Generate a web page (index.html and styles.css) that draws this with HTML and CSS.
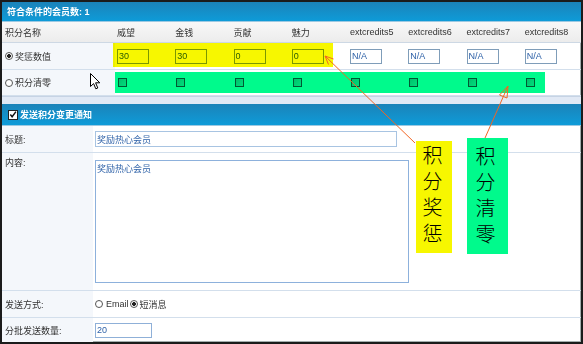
FILE: index.html
```html
<!DOCTYPE html>
<html lang="zh-CN">
<head>
    <meta charset="UTF-8">
    <title>积分奖惩</title>
    <link rel="stylesheet" href="styles.css">
</head>
<body>

    <div class="frame">
        <!-- 积分设置 -->
        <div class="bar">符合条件的会员数: 1</div>

        <div class="cols head">
            <div class="name">积分名称</div>
            <div>威望</div>
            <div>金钱</div>
            <div>贡献</div>
            <div>魅力</div>
            <div>extcredits5</div>
            <div>extcredits6</div>
            <div>extcredits7</div>
            <div>extcredits8</div>
        </div>

        <div class="cols row">
            <div class="name"><label><input type="radio" name="mode" class="radio" checked>奖惩数值</label></div>
            <div><input class="txt" value="30"></div>
            <div><input class="txt" value="30"></div>
            <div><input class="txt" value="0"></div>
            <div><input class="txt" value="0"></div>
            <div><input class="txt" value="N/A"></div>
            <div><input class="txt" value="N/A"></div>
            <div><input class="txt" value="N/A"></div>
            <div><input class="txt" value="N/A"></div>
        </div>

        <div class="cols row row-clear">
            <div class="name"><label><input type="radio" name="mode" class="radio">积分清零</label></div>
            <div><input type="checkbox" class="chk"></div>
            <div><input type="checkbox" class="chk"></div>
            <div><input type="checkbox" class="chk"></div>
            <div><input type="checkbox" class="chk"></div>
            <div><input type="checkbox" class="chk"></div>
            <div><input type="checkbox" class="chk"></div>
            <div><input type="checkbox" class="chk"></div>
            <div><input type="checkbox" class="chk"></div>
        </div>

        <div class="gap"></div>

        <!-- 通知设置 -->
        <div class="bar bar-notice">
            <span class="tick"><svg width="9" height="9" viewBox="0 0 9 9"><path d="M1.5 4.5 L3.5 7 L7.8 1.2" fill="none" stroke="#111" stroke-width="1.6"/></svg></span>
            发送积分变更通知
        </div>

        <div class="form-row">
            <div class="lbl">标题:</div>
            <div class="field"><input class="txt wide" value="奖励热心会员"></div>
        </div>

        <div class="form-row tall">
            <div class="lbl">内容:</div>
            <div class="field"><textarea class="area">奖励热心会员</textarea></div>
        </div>

        <div class="form-row">
            <div class="lbl">发送方式:</div>
            <div class="field">
                <label class="opt"><input type="radio" name="via" class="radio">Email</label>
                <label><input type="radio" name="via" class="radio" checked>短消息</label>
            </div>
        </div>

        <div class="form-row last">
            <div class="lbl">分批发送数量:</div>
            <div class="field"><input class="txt short" value="20"></div>
        </div>

        <!-- 标注 -->
        <div class="hl hl-yellow"></div>
        <div class="hl hl-green"></div>
        <div class="note note-yellow">积分奖惩</div>
        <div class="note note-green">积分清零</div>

        <svg class="arrows" width="579" height="340" viewBox="0 0 579 340">
            <g fill="none" stroke="#f26522" stroke-width="1">
                <line x1="413" y1="141" x2="323" y2="54"/>
                <polyline points="326.5,62.5 323,54 331.5,57"/>
                <line x1="483" y1="136" x2="506" y2="84"/>
                <polygon points="506,84 497.5,93 505,96"/>
            </g>
        </svg>

        <svg class="cursor" width="11" height="17" viewBox="0 0 11 17">
            <path d="M0.5 0.5 L0.5 13.5 L3.6 10.6 L5.8 15.8 L7.8 15 L5.6 9.8 L9.8 9.8 Z" fill="#fff" stroke="#000" stroke-width="1"/>
        </svg>
    </div>

</body>
</html>
```

FILE: styles.css
```css
* {
    box-sizing: border-box;
}

body {
    margin: 0;
    font-family: "Liberation Sans", "Noto Sans CJK SC", sans-serif;
    font-size: 9px;
    color: #333;
    background-color: #fff;
}

.frame {
    position: relative;
    width: 583px;
    height: 344px;
    border: 2px solid #1b1b1b;
    overflow: hidden;
    box-shadow: inset -1px -1px 0 #a3adad;
}

label {
    display: inline-flex;
    align-items: center;
}

/* 蓝色标题栏 */
.bar {
    height: 20px;
    padding-left: 5px;
    display: flex;
    align-items: center;
    background: linear-gradient(#1b83b9, #0e9bd8);
    border-bottom: 1px solid #9cc9e2;
    color: #fff;
    font-weight: bold;
}

.bar-notice {
    height: 22px;
    padding-left: 6px;
    gap: 2px;
}

.tick {
    width: 10px;
    height: 10px;
    display: inline-flex;
    align-items: center;
    justify-content: center;
    background-color: #fff;
    border: 1px solid #222;
}

/* 积分表格 */
.cols {
    display: grid;
    grid-template-columns: 113px repeat(8, 1fr);
}

.cols > div {
    display: flex;
    align-items: center;
    padding-left: 2px;
}

.cols > .name {
    padding-left: 3px;
}

.head {
    height: 21px;
    background: linear-gradient(#f8f8f8, #ececec);
    border-bottom: 1px solid #cdd8e4;
}

.row {
    height: 27px;
    border-bottom: 1px solid #d3dfec;
}

.row-clear {
    height: 26px;
}

.row .name {
    background-color: #f4f7fb;
}

.txt {
    width: 32px;
    height: 15px;
    margin: 0;
    padding: 0 1px;
    border: 1px solid #7f9db9;
    background-color: #fff;
    font: inherit;
    color: #2f62a8;
}

.radio {
    appearance: none;
    width: 8px;
    height: 8px;
    margin: 0 2px 0 0;
    border: 1px solid #555;
    border-radius: 50%;
    background-color: #fff;
}

.radio:checked {
    background: radial-gradient(circle, #222 0 1.6px, #fff 2.2px);
}

.opt .radio {
    margin-right: 3px;
}

.chk {
    appearance: none;
    width: 9px;
    height: 9px;
    margin: 0 0 0 1px;
    border: 1px solid #5a5a5a;
    background: linear-gradient(135deg, #c4c4c4, #e2e2e2);
}

.gap {
    height: 8px;
    background-color: #e1e9f5;
    border-top: 1px solid #c6d3e4;
}

/* 通知表单 */
.form-row {
    display: grid;
    grid-template-columns: 91px 1fr;
    height: 27px;
    border-bottom: 1px solid #d3dfec;
}

.form-row.tall {
    height: 138px;
}

.form-row.last {
    height: 24px;
    border-bottom: none;
}

.lbl {
    display: flex;
    align-items: center;
    padding-left: 3px;
    background-color: #f4f7fb;
}

.tall .lbl {
    align-items: flex-start;
    padding-top: 3px;
}

.field {
    display: flex;
    align-items: center;
    padding-left: 2px;
    gap: 1px;
}

.tall .field {
    align-items: flex-start;
    padding-top: 7px;
}

.txt.wide {
    width: 302px;
    height: 16px;
    border-color: #a8c4e2;
}

.txt.short {
    width: 57px;
    border-color: #8fb0d8;
}

.area {
    width: 314px;
    height: 123px;
    margin: 0;
    padding: 1px;
    border: 1px solid #8db1dc;
    font: inherit;
    color: #2f62a8;
    resize: none;
}

/* 高亮与标注 */
.hl {
    position: absolute;
    mix-blend-mode: multiply;
}

.hl-yellow {
    left: 111px;
    top: 41px;
    width: 220px;
    height: 24px;
    background-color: #f7f700;
}

.hl-green {
    left: 113px;
    top: 70px;
    width: 430px;
    height: 21px;
    background-color: #00fa8c;
}

.note {
    position: absolute;
    writing-mode: vertical-rl;
    font-size: 20px;
    line-height: 20px;
    letter-spacing: 6px;
    color: #000;
    font-family: "Noto Sans CJK SC", sans-serif;
    font-weight: 300;
}

.note-yellow {
    left: 414px;
    top: 139px;
    width: 36px;
    height: 112px;
    padding: 4px 10px 0 6px;
    background-color: #f7f700;
}

.note-green {
    left: 465px;
    top: 136px;
    width: 41px;
    height: 116px;
    padding: 8px 13px 0 8px;
    background-color: #00fa8c;
}

.arrows {
    position: absolute;
    left: 0;
    top: 0;
}

.cursor {
    position: absolute;
    left: 88px;
    top: 71px;
}
```
